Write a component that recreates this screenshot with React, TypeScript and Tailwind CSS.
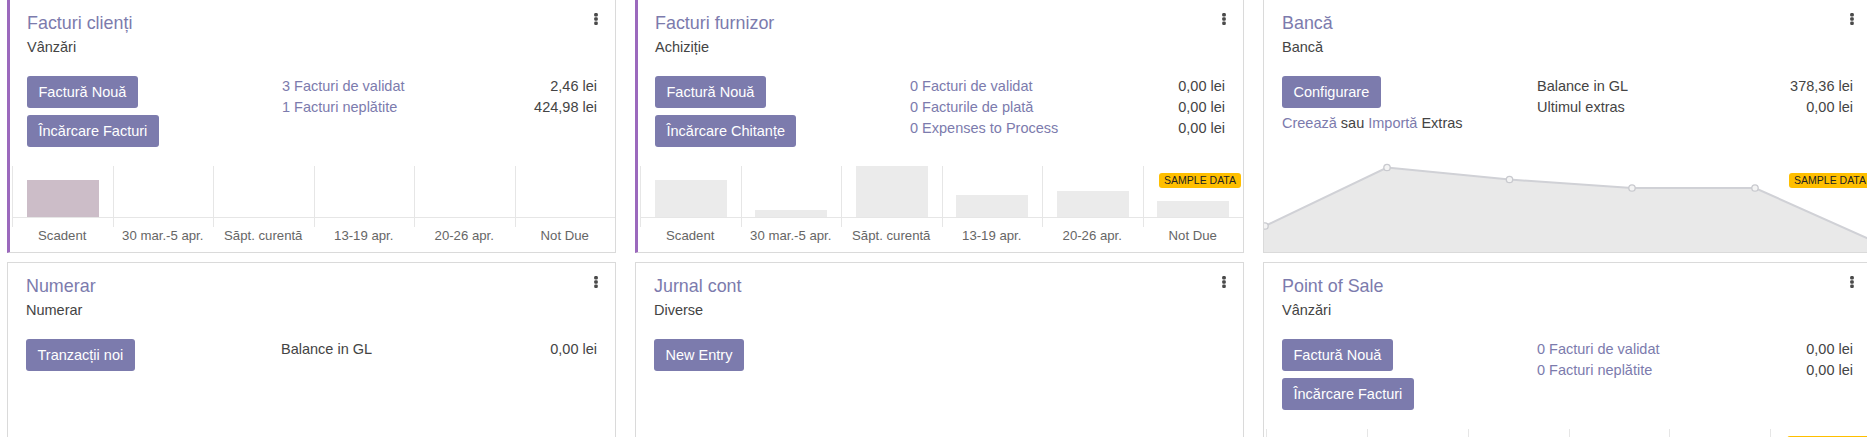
import React from 'react';

const LINK = 'text-[#7c7bad]';
const LABELS = ['Scadent', '30 mar.-5 apr.', 'Săpt. curentă', '13-19 apr.', '20-26 apr.', 'Not Due'];

type Row = { label: string; value: string; link?: boolean };

function Kebab() {
  return (
    <svg className="absolute right-[17px] top-[13px]" width="4" height="12" viewBox="0 0 4 12">
      <rect x="0.2" y="0" width="3.6" height="3.4" rx="1.2" fill="#4a4a4a" />
      <rect x="0.2" y="4.3" width="3.6" height="3.4" rx="1.2" fill="#4a4a4a" />
      <rect x="0.2" y="8.6" width="3.6" height="3.4" rx="1.2" fill="#4a4a4a" />
    </svg>
  );
}

function Btn({ children }: { children: React.ReactNode }) {
  return (
    <button className="flex h-[32px] items-center rounded-[3px] bg-[#7c7bad] px-[11.5px] whitespace-nowrap text-white">
      {children}
    </button>
  );
}

function SampleBadge({ className }: { className: string }) {
  return (
    <span
      className={`${className} flex h-[15px] items-center rounded-[3px] bg-[#ffbf00] px-[5px] text-[10.5px] leading-none text-[#222]`}
    >
      SAMPLE DATA
    </span>
  );
}

function Stats({ rows }: { rows: Row[] }) {
  return (
    <div className="flex-1">
      {rows.map((r) => (
        <div key={r.label} className="flex justify-between">
          <span className={r.link ? LINK : ''}>{r.label}</span>
          <span>{r.value}</span>
        </div>
      ))}
    </div>
  );
}

function BarChart({
  values,
  barClass,
  sample,
  hideLabels,
}: {
  values: number[];
  barClass: string;
  sample?: boolean;
  hideLabels?: boolean;
}) {
  return (
    <div className="relative mt-auto mb-[7px] ml-[2px]">
      <div className="grid grid-cols-6">
        {values.map((v, i) => (
          <div key={i} className="flex h-[51px] items-end justify-center border-l border-[#e6e6e6]">
            {v > 0 && <div className={`w-[72%] ${barClass}`} style={{ height: Math.round(v * 51) }} />}
          </div>
        ))}
      </div>
      <div className="h-px bg-[#e6e6e6]" />
      <div className="grid grid-cols-6">
        {LABELS.map((l) => (
          <div key={l} className="h-[9px] border-l border-[#e6e6e6]" />
        ))}
      </div>
      {/* labels of the lower cards fall below the window, keep only the space */}
      {hideLabels ? (
        <div className="h-[18px]" />
      ) : (
        <div className="grid grid-cols-6 text-center text-[13.2px] leading-[18px] text-[#666]">
          {LABELS.map((l) => (
            <div key={l} className="whitespace-nowrap">
              {l}
            </div>
          ))}
        </div>
      )}
      {sample && <SampleBadge className="absolute right-[2px] top-[7px]" />}
    </div>
  );
}

function LineChart() {
  const pts: [number, number][] = [
    [1, 65],
    [123, 6.5],
    [245.5, 18.5],
    [368, 27],
    [491, 27],
    [614, 82],
  ];
  const line = pts.map((p, i) => `${i ? 'L' : 'M'}${p[0]} ${p[1]}`).join(' ');
  return (
    <div className="relative mt-auto h-[91px]">
      <svg width="100%" height="91" className="block">
        <path d={`${line} L614 91 L0 91 L0 65 Z`} fill="#e9e9e9" />
        <path d={line} fill="none" stroke="#d0d1d6" strokeWidth="2" />
        {pts.map((p) => (
          <circle key={p[0]} cx={p[0]} cy={p[1]} r="3.2" fill="#f4f4f4" stroke="#c9cacf" strokeWidth="1.3" />
        ))}
      </svg>
      <SampleBadge className="absolute right-0 top-[12px]" />
    </div>
  );
}

function Card({
  title,
  sub,
  purple,
  children,
  chart,
}: {
  title: string;
  sub: string;
  purple?: boolean;
  children?: React.ReactNode;
  chart?: React.ReactNode;
}) {
  return (
    <div
      className={`relative flex h-[254px] flex-col border border-[#dadada] bg-white ${
        purple ? 'border-l-[3px] border-l-[#9b69bd]' : ''
      }`}
    >
      <Kebab />
      <div className={`pt-[11px] pr-[18px] ${purple ? 'pl-[17px]' : 'pl-[18px]'}`}>
        <div className="text-[17.9px] leading-[25px] text-[#7c7bad]">{title}</div>
        <div className="mt-px">{sub}</div>
        <div className="mt-[18px] flex">{children}</div>
      </div>
      {chart}
    </div>
  );
}

export default function App() {
  return (
    <div className="h-[437px] w-full overflow-hidden bg-white font-['Liberation_Sans',Arial,sans-serif] text-[14.5px] leading-[21px] text-[#444]">
      <div className="-mt-px grid w-max grid-cols-[609px_609px_609px] gap-x-[19px] gap-y-[9px] pl-[7px]">
        {/* Facturi clienti */}
        <Card
          title="Facturi clienți"
          sub="Vânzări"
          purple
          chart={<BarChart values={[0.72, 0, 0, 0, 0, 0]} barClass="bg-[#ccbdc8]" />}
        >
          <div className="flex w-[255px] flex-col items-start gap-[7px]">
            <Btn>Factură Nouă</Btn>
            <Btn>Încărcare Facturi</Btn>
          </div>
          <Stats
            rows={[
              { label: '3 Facturi de validat', value: '2,46 lei', link: true },
              { label: '1 Facturi neplătite', value: '424,98 lei', link: true },
            ]}
          />
        </Card>

        {/* Facturi furnizor */}
        <Card
          title="Facturi furnizor"
          sub="Achiziție"
          purple
          chart={<BarChart values={[0.73, 0.14, 1, 0.44, 0.5, 0.31]} barClass="bg-[#ebebeb]" sample />}
        >
          <div className="flex w-[255px] flex-col items-start gap-[7px]">
            <Btn>Factură Nouă</Btn>
            <Btn>Încărcare Chitanțe</Btn>
          </div>
          <Stats
            rows={[
              { label: '0 Facturi de validat', value: '0,00 lei', link: true },
              { label: '0 Facturile de plată', value: '0,00 lei', link: true },
              { label: '0 Expenses to Process', value: '0,00 lei', link: true },
            ]}
          />
        </Card>

        {/* Banca */}
        <Card title="Bancă" sub="Bancă" chart={<LineChart />}>
          <div className="flex w-[255px] flex-col items-start gap-[7px]">
            <Btn>Configurare</Btn>
            <div className="-mt-[2px]">
              <span className={LINK}>Creează</span> sau <span className={LINK}>Importă</span> Extras
            </div>
          </div>
          <Stats
            rows={[
              { label: 'Balance in GL', value: '378,36 lei' },
              { label: 'Ultimul extras', value: '0,00 lei' },
            ]}
          />
        </Card>

        {/* Numerar */}
        <Card title="Numerar" sub="Numerar">
          <div className="flex w-[255px] flex-col items-start">
            <Btn>Tranzacții noi</Btn>
          </div>
          <Stats rows={[{ label: 'Balance in GL', value: '0,00 lei' }]} />
        </Card>

        {/* Jurnal cont */}
        <Card title="Jurnal cont" sub="Diverse">
          <div className="flex w-[255px] flex-col items-start">
            <Btn>New Entry</Btn>
          </div>
        </Card>

        {/* Point of Sale */}
        <Card
          title="Point of Sale"
          sub="Vânzări"
          chart={
            <BarChart values={[0.6, 0.3, 0.5, 0.75, 0.4, 0.2]} barClass="bg-[#ebebeb]" sample hideLabels />
          }
        >
          <div className="flex w-[255px] flex-col items-start gap-[7px]">
            <Btn>Factură Nouă</Btn>
            <Btn>Încărcare Facturi</Btn>
          </div>
          <Stats
            rows={[
              { label: '0 Facturi de validat', value: '0,00 lei', link: true },
              { label: '0 Facturi neplătite', value: '0,00 lei', link: true },
            ]}
          />
        </Card>
      </div>
    </div>
  );
}
